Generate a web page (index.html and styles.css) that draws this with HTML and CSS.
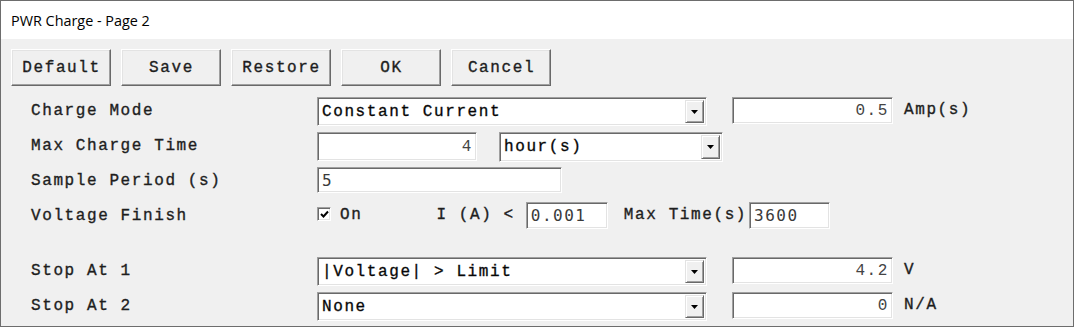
FILE: index.html
```html
<!DOCTYPE html>
<html lang="en">
<head>
  <meta charset="UTF-8" />
  <title>PWR Charge - Page 2</title>
  <link rel="stylesheet" href="styles.css">
</head>
<body>
  <div class="window">
    <div class="titlebar">PWR Charge - Page 2</div>

    <div class="client">
      <div class="toolbar">
        <button class="btn">Default</button>
        <button class="btn">Save</button>
        <button class="btn">Restore</button>
        <button class="btn">OK</button>
        <button class="btn">Cancel</button>
      </div>

      <div class="form">
        <div class="row">
          <span class="label">Charge Mode</span>
          <div class="combo combo-wide">
            <span class="combo-text">Constant Current</span>
            <span class="combo-btn"><svg width="7" height="4" viewBox="0 0 7 4"><polygon points="0,0 7,0 3.5,4" fill="#000"/></svg></span>
          </div>
          <input class="edit edit-value" type="text" value="0.5">
          <span class="unit">Amp(s)</span>
        </div>

        <div class="row">
          <span class="label">Max Charge Time</span>
          <input class="edit edit-hours" type="text" value="4">
          <div class="combo combo-unit">
            <span class="combo-text">hour(s)</span>
            <span class="combo-btn"><svg width="7" height="4" viewBox="0 0 7 4"><polygon points="0,0 7,0 3.5,4" fill="#000"/></svg></span>
          </div>
        </div>

        <div class="row">
          <span class="label">Sample Period (s)</span>
          <input class="edit edit-plain edit-period" type="text" value="5">
        </div>

        <div class="row">
          <span class="label">Voltage Finish</span>
          <span class="check">
            <svg width="9" height="8" viewBox="0 0 9 8"><polyline points="1,4 3.5,6.5 8,1.5" fill="none" stroke="#000" stroke-width="2"/></svg>
          </span>
          <span class="check-label">On</span>
          <span class="text current-label">I (A) &lt;</span>
          <input class="edit edit-plain edit-small current-input" type="text" value="0.001">
          <span class="text time-label">Max Time(s)</span>
          <input class="edit edit-plain edit-small time-input" type="text" value="3600">
        </div>

        <div class="row row-spaced">
          <span class="label">Stop At 1</span>
          <div class="combo combo-wide">
            <span class="combo-text">|Voltage| &gt; Limit</span>
            <span class="combo-btn"><svg width="7" height="4" viewBox="0 0 7 4"><polygon points="0,0 7,0 3.5,4" fill="#000"/></svg></span>
          </div>
          <input class="edit edit-value" type="text" value="4.2">
          <span class="unit">V</span>
        </div>

        <div class="row">
          <span class="label">Stop At 2</span>
          <div class="combo combo-wide">
            <span class="combo-text">None</span>
            <span class="combo-btn"><svg width="7" height="4" viewBox="0 0 7 4"><polygon points="0,0 7,0 3.5,4" fill="#000"/></svg></span>
          </div>
          <input class="edit edit-value" type="text" value="0">
          <span class="unit">N/A</span>
        </div>
      </div>
    </div>
  </div>
</body>
</html>
```

FILE: styles.css
```css
body {
  margin: 0;
  background: #fff;
  font-family: "Liberation Mono", "Courier New", monospace;
  color: #1e1e1e;
}
.window {
  width: 1074px;
  height: 327px;
  box-sizing: border-box;
  border: 1px solid #6d6d6d;
  background: #f0f0f0;
  display: flex;
  flex-direction: column;
}
.titlebar {
  height: 38px;
  flex-shrink: 0;
  background: #fff;
  padding-left: 10px;
  display: flex;
  align-items: center;
  font-family: "Open Sans", "Noto Sans", sans-serif;
  font-size: 14.4px;
  color: #000;
}
.client {
  padding: 10px 0 0 10px;
}
.toolbar {
  display: flex;
  gap: 10px;
}

/* courier-ish look: small glyphs, wide pitch */
.btn,
.row {
  font-size: 16px;
  letter-spacing: 1.6px;
  -webkit-text-stroke: 0.35px #1e1e1e;
}
.btn {
  width: 100px;
  height: 37px;
  padding: 0 0 0 1px;
  background: #f0f0f0;
  border: 1px solid;
  border-color: #fff #696969 #696969 #fff;
  box-shadow: inset -1px -1px #a0a0a0, inset 1px 1px #e3e3e3;
  font-family: inherit;
  color: #1e1e1e;
}
.form {
  margin-top: 11px;
  padding-left: 20px;
  display: flex;
  flex-direction: column;
  gap: 7px;
}
.row {
  display: flex;
  align-items: flex-start;
  height: 28px;
}
.row-spaced {
  margin-top: 20px;
}
.label {
  width: 286px;
  flex-shrink: 0;
  line-height: 28px;
}
.text,
.unit,
.check-label {
  line-height: 26px;
  white-space: pre;
}
.unit {
  margin-left: 11px;
}

/* sunken fields */
.combo,
.edit,
.check {
  box-sizing: border-box;
  border: 1px solid;
  border-color: #a0a0a0 #fff #fff #a0a0a0;
  box-shadow: inset 1px 1px #696969, inset -1px -1px #e3e3e3;
  background: #fff;
}
.combo {
  height: 29px;
  display: flex;
  align-items: center;
  padding: 2px;
}
.combo-wide {
  width: 390px;
}
.combo-unit {
  width: 224px;
  height: 30px;
  margin-left: 22px;
}
.combo-text {
  flex: 1;
  padding-left: 2px;
  white-space: pre;
  color: #000;
}
.combo-btn {
  width: 19px;
  align-self: stretch;
  box-sizing: border-box;
  background: #f0f0f0;
  border: 1px solid;
  border-color: #e3e3e3 #696969 #696969 #e3e3e3;
  box-shadow: inset 1px 1px #fff, inset -1px -1px #a0a0a0;
  display: flex;
  align-items: center;
  justify-content: center;
}
.edit {
  height: 27px;
  padding: 0 3px 0 4px;
  margin: 0;
  font-family: inherit;
  font-size: 16px;
  letter-spacing: 1.6px;
  -webkit-text-stroke: 0;
  color: #444;
  outline: none;
}
.edit-value {
  width: 161px;
  margin-left: 25px;
  text-align: right;
}
.edit-hours {
  width: 160px;
  height: 29px;
  text-align: right;
}
.edit-plain {
  font-family: "DejaVu Sans Mono", monospace;
  font-size: 16px;
  letter-spacing: 1.5px;
  color: #3a3a3a;
}
.edit-period {
  width: 245px;
  height: 26px;
}
.edit-small {
  height: 27px;
}
.current-input {
  width: 82px;
  margin-left: 11px;
}
.time-input {
  width: 81px;
  margin-left: 2px;
}
.check {
  width: 14px;
  height: 14px;
  margin-top: 5px;
  display: flex;
  align-items: center;
  justify-content: center;
}
.check-label {
  margin-left: 9px;
}
.current-label {
  margin-left: 74px;
}
.time-label {
  margin-left: 16px;
}
```
